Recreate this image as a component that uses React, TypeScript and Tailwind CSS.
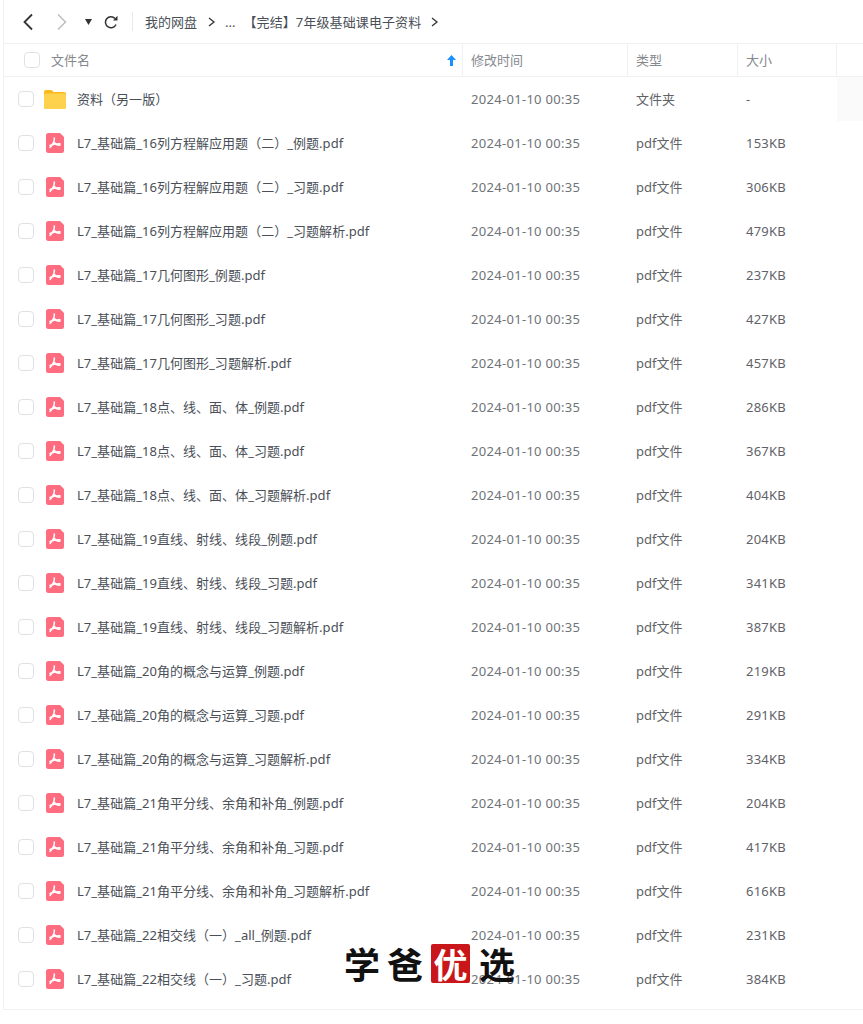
const FONT = "font-['Noto_Sans','Noto_Sans_CJK_SC',sans-serif]";

const rows: [string, string][] = [
  ["L7_基础篇_16列方程解应用题（二）_例题.pdf", "153KB"],
  ["L7_基础篇_16列方程解应用题（二）_习题.pdf", "306KB"],
  ["L7_基础篇_16列方程解应用题（二）_习题解析.pdf", "479KB"],
  ["L7_基础篇_17几何图形_例题.pdf", "237KB"],
  ["L7_基础篇_17几何图形_习题.pdf", "427KB"],
  ["L7_基础篇_17几何图形_习题解析.pdf", "457KB"],
  ["L7_基础篇_18点、线、面、体_例题.pdf", "286KB"],
  ["L7_基础篇_18点、线、面、体_习题.pdf", "367KB"],
  ["L7_基础篇_18点、线、面、体_习题解析.pdf", "404KB"],
  ["L7_基础篇_19直线、射线、线段_例题.pdf", "204KB"],
  ["L7_基础篇_19直线、射线、线段_习题.pdf", "341KB"],
  ["L7_基础篇_19直线、射线、线段_习题解析.pdf", "387KB"],
  ["L7_基础篇_20角的概念与运算_例题.pdf", "219KB"],
  ["L7_基础篇_20角的概念与运算_习题.pdf", "291KB"],
  ["L7_基础篇_20角的概念与运算_习题解析.pdf", "334KB"],
  ["L7_基础篇_21角平分线、余角和补角_例题.pdf", "204KB"],
  ["L7_基础篇_21角平分线、余角和补角_习题.pdf", "417KB"],
  ["L7_基础篇_21角平分线、余角和补角_习题解析.pdf", "616KB"],
  ["L7_基础篇_22相交线（一）_all_例题.pdf", "231KB"],
  ["L7_基础篇_22相交线（一）_习题.pdf", "384KB"],
];

function Check() {
  return <span className="block w-4 h-4 rounded-[4px] border border-[#e0e1e4] bg-white shrink-0" />;
}

function FolderIcon() {
  return (
    <svg width="22" height="20" viewBox="0 0 22 20" className="shrink-0">
      <path d="M0 3a2 2 0 0 1 2-2h5.500l2 2H20a2 2 0 0 1 2 2v13a2 2 0 0 1-2 2H2a2 2 0 0 1-2-2Z" fill="#f9b81d" />
      <path d="M0 6a1.500 1.500 0 0 1 1.500-1.500h19A1.500 1.500 0 0 1 22 6v12a2 2 0 0 1-2 2H2a2 2 0 0 1-2-2Z" fill="#ffd24d" />
    </svg>
  );
}

function PdfIcon() {
  return (
    <svg width="18" height="20" viewBox="0 0 18 20" className="shrink-0">
      <path d="M2.500 0H14l4 4v13.500a2.500 2.500 0 0 1-2.500 2.500h-13A2.500 2.500 0 0 1 0 17.500v-15A2.500 2.500 0 0 1 2.500 0Z" fill="#ff6b7f" />
      <path d="M8.300 5c.5 3-1 6-4.300 9.500 M8.300 9.500c1.200 1.800 3 2.800 5.700 2.600 M4 12.500c3-1.300 6-1.800 10-1.700" fill="none" stroke="#fff" strokeWidth="1.500" strokeLinecap="round" />
    </svg>
  );
}

function Row({ icon, name, type, size, tail }: { icon: React.ReactNode; name: string; type: string; size: string; tail?: boolean }) {
  return (
    <div className="flex h-[44px] items-center text-[13px] leading-[20px] text-[#5f6368]">
      <div className="w-[459px] shrink-0 flex items-center pl-[14px]">
        <Check />
        <span className="w-[22px] ml-[10px] flex justify-center shrink-0">{icon}</span>
        <span className="ml-[11px] tracking-[0.03px] text-[#4a4f57] whitespace-nowrap">{name}</span>
      </div>
      <div className="w-[165px] shrink-0 pl-[8px] tracking-[0.3px] whitespace-nowrap text-[#6f7378]">2024-01-10 00:35</div>
      <div className="w-[110px] shrink-0 pl-[8px]">{type}</div>
      <div className="w-[99px] shrink-0 pl-[8px] tracking-[0.25px]">{size}</div>
      {tail && <div className="flex-1 self-stretch bg-[#fafafb]" />}
    </div>
  );
}

function HeadCell({ label, width }: { label: string; width: string }) {
  return (
    <div className={`${width} shrink-0 h-full flex items-center pl-[8px] border-l border-[#f0f1f3]`}>{label}</div>
  );
}

export default function App() {
  return (
    <div className={`relative w-[863px] h-[1024px] overflow-hidden bg-white ${FONT}`}>
      <div className="ml-[3px] h-[1010px] border-l border-[#f0f1f3] border-b">
        <div className="h-[44px] flex items-center border-b border-[#f0f1f3] text-[13px] leading-[20px] text-[#4a4f57]">
          <svg width="12" height="18" viewBox="0 0 12 18" className="ml-[18px] shrink-0">
            <path d="M10 1.500 2.500 9l7.500 7.500" fill="none" stroke="#333" strokeWidth="1.800" />
          </svg>
          <svg width="12" height="18" viewBox="0 0 12 18" className="ml-[22px] shrink-0">
            <path d="M2 1.500 9.500 9 2 16.500" fill="none" stroke="#bdbdbd" strokeWidth="1.500" />
          </svg>
          <svg width="7" height="6" viewBox="0 0 7 6" className="ml-[17px] shrink-0">
            <path d="M0 0h7L3.500 6Z" fill="#333" />
          </svg>
          <svg width="14" height="14" viewBox="0 0 14 14" className="ml-[12px] shrink-0">
            <path d="M12 9.500A5.500 5.500 0 1 1 11 3.500" fill="none" stroke="#333" strokeWidth="1.500" />
            <path d="M13.500 .8v4.700H9Z" fill="#333" />
          </svg>
          <span className="ml-[14px] w-px h-[19px] bg-[#e8e9eb]" />
          <span className="ml-[12px]">我的网盘</span>
          <svg width="8" height="10" viewBox="0 0 8 10" className="ml-[11px]"><path d="M1 1l5 4-5 4" fill="none" stroke="#333" strokeWidth="1.300" /></svg>
          <span className="ml-[9px]">...</span>
          <span className="ml-[8px] tracking-[0.1px]">【完结】7年级基础课电子资料</span>
          <svg width="8" height="10" viewBox="0 0 8 10" className="ml-[10px]"><path d="M1 1l5 4-5 4" fill="none" stroke="#333" strokeWidth="1.300" /></svg>
        </div>
        <div className="h-[33px] flex items-center border-b border-[#f0f1f3] text-[13px] leading-[20px] text-[#85898e]">
          <div className="w-[458px] shrink-0 flex items-center pl-[20px] h-full">
            <Check />
            <span className="ml-[11px]">文件名</span>
            <svg width="9" height="11" viewBox="0 0 9 11" className="ml-auto mr-[6px] mt-[1px]">
              <path d="M4.500 0 9 5H6v6H3V5H0Z" fill="#1890ff" />
            </svg>
          </div>
          <HeadCell label="修改时间" width="w-[165px]" />
          <HeadCell label="类型" width="w-[110px]" />
          <HeadCell label="大小" width="w-[99px]" />
          <div className="flex-1 h-full border-l border-[#f0f1f3]" />
        </div>
        <Row icon={<FolderIcon />} name="资料（另一版）" type="文件夹" size="-" tail />
        {rows.map(([n, s]) => (
          <Row key={n} icon={<PdfIcon />} name={n} type="pdf文件" size={s} />
        ))}
      </div>
      <div className="absolute left-[344px] top-[941px] flex items-center text-[36px] leading-[44px] font-bold text-[#111] font-['Noto_Sans_CJK_SC',sans-serif]">
        <span className="tracking-[7px]">学爸</span>
        <span className="ml-[1px] w-[39px] h-[39px] mt-[1px] bg-[#c8161a] rounded-[2px] text-white flex items-center justify-center text-[34px]">优</span>
        <span className="ml-[9px]">选</span>
      </div>
    </div>
  );
}
